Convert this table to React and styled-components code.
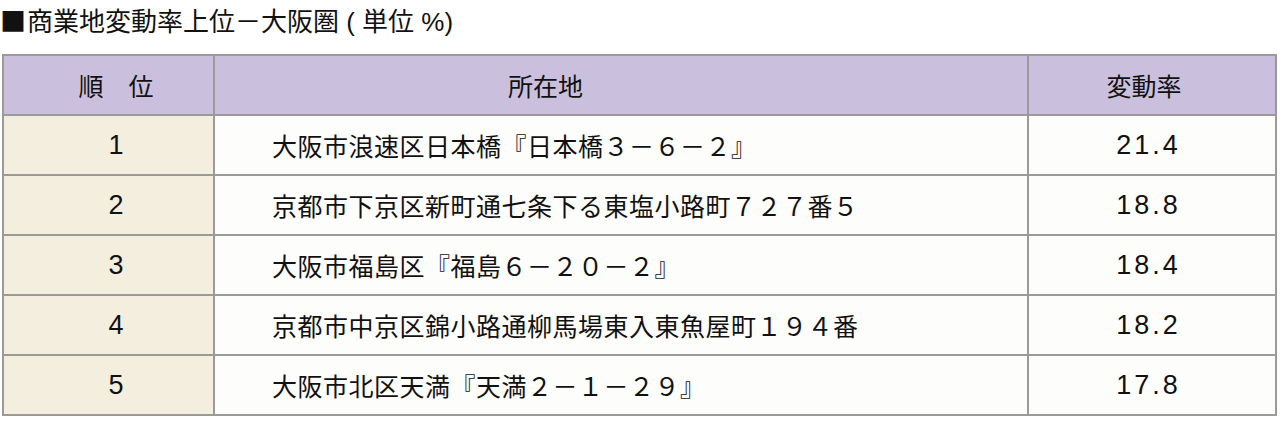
import React from "react";
import styled, { createGlobalStyle } from "styled-components";

const GlobalStyle = createGlobalStyle`
  html, body { margin: 0; padding: 0; background: #ffffff; }
  body {
    font-family: "Liberation Sans", "Noto Sans CJK JP", sans-serif;
    color: #111111;
  }
`;

const Page = styled.div`
  width: 1280px;
  height: 422px;
  overflow: hidden;
`;

const Title = styled.h2`
  margin: 0 0 14px 0;
  font-weight: 400;
  font-size: 26px;
  line-height: 40px;
  height: 40px;
  color: #111111;
  white-space: nowrap;
`;

const Square = styled.span`
  font-family: "Noto Sans CJK JP", sans-serif;
  margin-right: 1px;
`;

const Table = styled.div`
  margin-left: 2px;
  width: 1275px;
  box-sizing: border-box;
  display: grid;
  grid-template-columns: 209px 812px 246px;
  grid-auto-rows: 58px;
  gap: 2px;
  padding: 2px;
  background: #9a9a9a;
`;

const Cell = styled.div`
  display: flex;
  align-items: center;
  box-sizing: border-box;
  font-size: 25px;
  white-space: nowrap;
  background: ${(p) => p.$bg};
  justify-content: ${(p) => p.$justify || "center"};
  padding: ${(p) => p.$pad || "0"};
  letter-spacing: ${(p) => p.$ls || "0"};
`;

const Num = styled.span`
  font-size: 27px;
  letter-spacing: 3px;
  margin-right: -3px;
`;

const HEAD = "#cac0de";
const CREAM = "#f4eedf";
const WHITE = "#fdfdfb";

const rows = [
  ["1", "大阪市浪速区日本橋『日本橋３－６－２』", "21.4"],
  ["2", "京都市下京区新町通七条下る東塩小路町７２７番５", "18.8"],
  ["3", "大阪市福島区『福島６－２０－２』", "18.4"],
  ["4", "京都市中京区錦小路通柳馬場東入東魚屋町１９４番", "18.2"],
  ["5", "大阪市北区天満『天満２－１－２９』", "17.8"],
];

export default function App() {
  return (
    <Page>
      <GlobalStyle />
      <Title>
        <Square>■</Square>商業地変動率上位－大阪圏 ( 単位 %)
      </Title>
      <Table>
        <Cell $bg={HEAD} $pad="0 0 0 15px">順　位</Cell>
        <Cell $bg={HEAD} $pad="0 151px 0 0">所在地</Cell>
        <Cell $bg={HEAD} $pad="0 16px 0 0">変動率</Cell>
        {rows.map(([rank, addr, rate]) => (
          <React.Fragment key={rank}>
            <Cell $bg={CREAM} $pad="0 0 0 15px">
              <Num>{rank}</Num>
            </Cell>
            <Cell $bg={WHITE} $justify="flex-start" $pad="0 0 0 57px" $ls="0.5px">
              {addr}
            </Cell>
            <Cell $bg={WHITE} $pad="0 10px 0 0">
              <Num>{rate}</Num>
            </Cell>
          </React.Fragment>
        ))}
      </Table>
    </Page>
  );
}
